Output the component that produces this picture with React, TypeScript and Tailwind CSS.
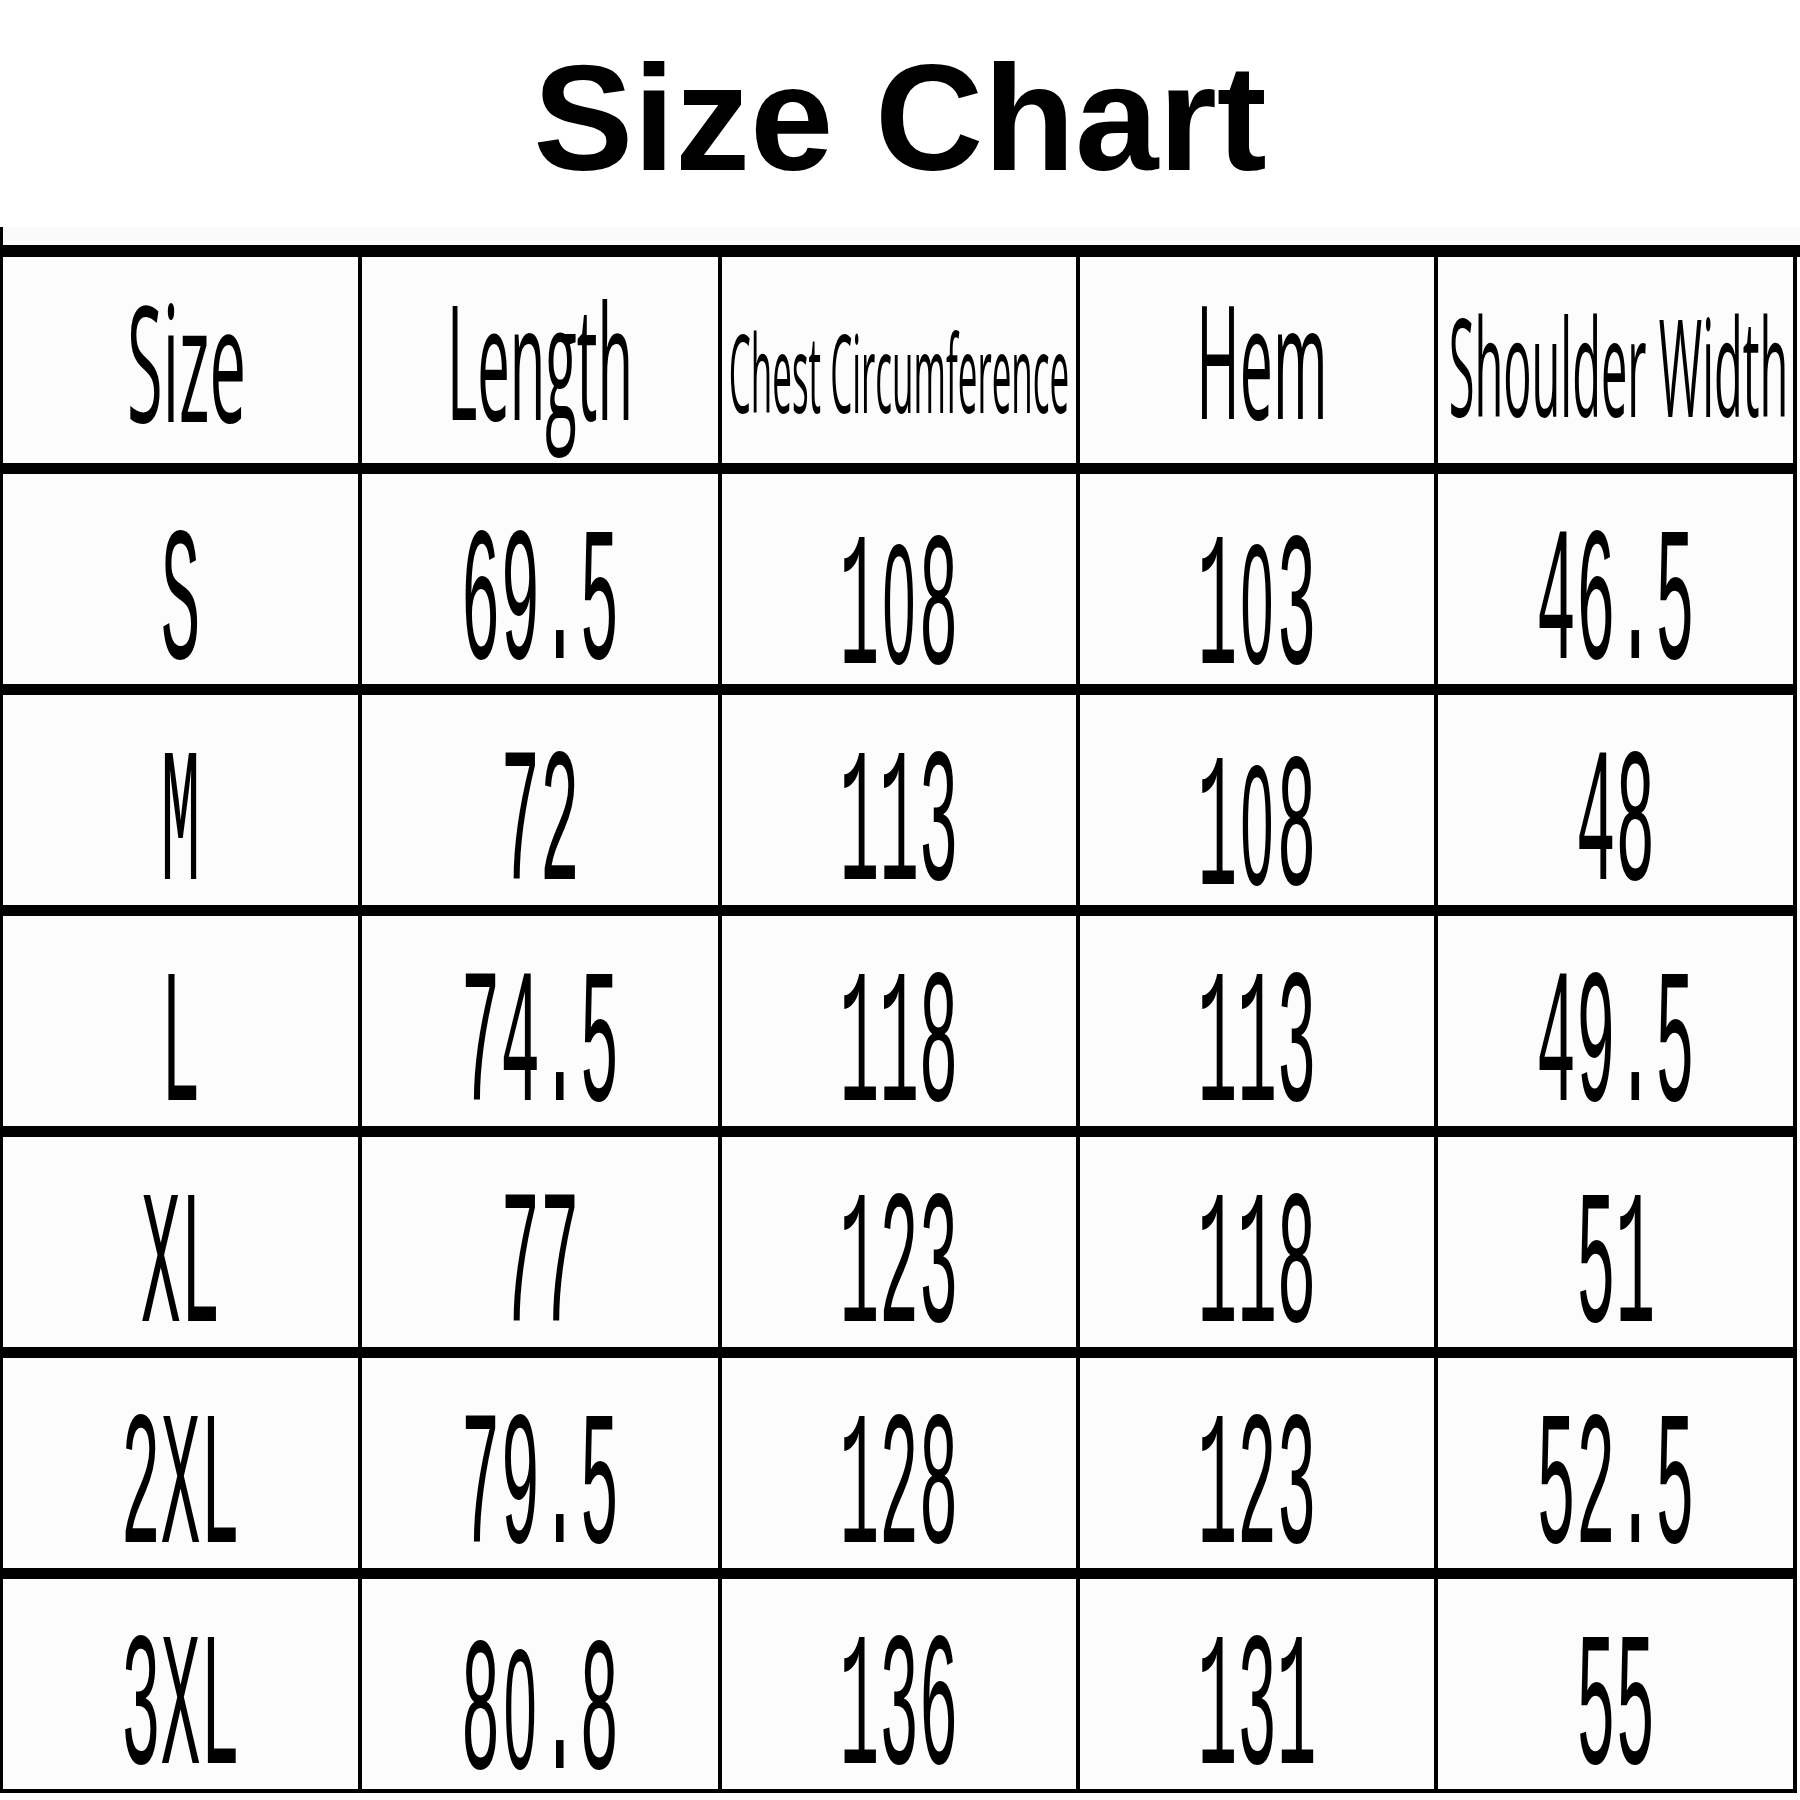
import React from 'react';

const COLS = 'grid grid-cols-[359px_360px_358px_358px_359px]';

const headers = [
  { label: 'Size', cls: 'text-[65px] scale-y-[2.47] translate-x-[6px]', pad: 'pt-0' },
  { label: 'Length', cls: 'text-[58px] scale-y-[2.74]', pad: 'pt-0' },
  { label: 'Chest Circumference', cls: 'text-[35px] scale-y-[3.1]', pad: 'pt-[26px]' },
  { label: 'Hem', cls: 'text-[59px] scale-y-[2.66] translate-x-[5px]', pad: 'pt-0' },
  { label: 'Shoulder Width', cls: 'text-[47px] scale-y-[2.89] translate-x-[3px]', pad: 'pt-[14px]' },
];

const rows = [
  ['S', '69.5', '108', '103', '46.5'],
  ['M', '72', '113', '108', '48'],
  ['L', '74.5', '118', '113', '49.5'],
  ['XL', '77', '123', '118', '51'],
  ['2XL', '79.5', '128', '123', '52.5'],
  ['3XL', '80.8', '136', '131', '55'],
];

// Liberation Mono draws a dotted zero; the chart has a plain one
function Value({ text }: { text: string }) {
  return (
    <>
      {text.split('').map((ch, i) =>
        ch === '0' ? (
          <span
            key={i}
            className="inline-block w-[39.6px] text-center text-[59px] font-['Liberation_Sans',Arial,sans-serif]"
          >
            0
          </span>
        ) : (
          <React.Fragment key={i}>{ch}</React.Fragment>
        )
      )}
    </>
  );
}

export default function App() {
  return (
    <div className="w-[1800px] h-[1800px] bg-white">
      {/* title */}
      <div className="h-[193px] pt-[43px] text-center text-[150px] leading-none font-bold text-black font-['Liberation_Sans',Arial,sans-serif]">
        Size Chart
      </div>
      <div className="h-[34px]" />
      <div className="flex h-[18px]">
        <div className="w-[3px] bg-black" />
        <div className="flex-1 bg-[#fafafa]" />
      </div>
      <div className="h-[12px] bg-black" />

      <div className="w-[1797px] border-l-[3px] border-black">
        {/* header row */}
        <div className={`${COLS} h-[206px]`}>
          {headers.map((h) => (
            <div
              key={h.label}
              className={`flex items-center justify-center border-r-4 border-black bg-[#fcfcfc] ${h.pad}`}
            >
              <span
                className={`inline-block whitespace-nowrap leading-[0.8] text-black font-['Open_Sans',sans-serif] ${h.cls}`}
              >
                {h.label}
              </span>
            </div>
          ))}
        </div>

        {/* data rows */}
        {rows.map((r) => (
          <div key={r[0]} className={`${COLS} h-[221px] border-t-[11px] border-black`}>
            {r.map((v, i) => (
              <div
                key={i}
                className="flex items-center justify-center border-r-4 border-black bg-[#fcfcfc] pt-[60px]"
              >
                <span className="inline-block whitespace-nowrap leading-[48px] text-[66px] scale-y-[2.9] text-black font-['Liberation_Mono',monospace]">
                  <Value text={v} />
                </span>
              </div>
            ))}
          </div>
        ))}
        <div className="h-[4px] bg-black" />
      </div>
    </div>
  );
}
